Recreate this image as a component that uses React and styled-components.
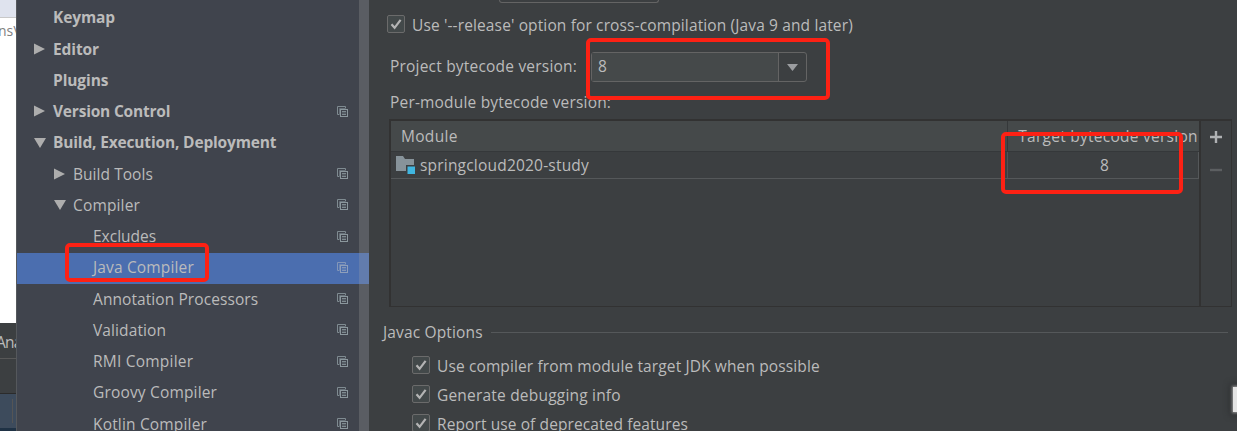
import React from 'react';
import styled, { createGlobalStyle } from 'styled-components';

const Global = createGlobalStyle`
  * { box-sizing: border-box; }
  body { margin: 0; background: #3c3f41; overflow: hidden; }
`;

const Window = styled.div`
  position: relative;
  display: flex;
  width: 1237px;
  height: 431px;
  overflow: hidden;
  background: #3c3f41;
  color: #bbbbbb;
  font-family: 'Open Sans', 'Noto Sans', sans-serif;
  font-size: 15.5px;
  line-height: 20px;
  white-space: nowrap;
`;

const Backdrop = styled.div`
  display: flex;
  flex-direction: column;
  flex: 0 0 17px;
  overflow: hidden;
  background: #fff;
  border-right: 1px solid #55585c;
`;
const BackTop = styled.div`
  height: 18px;
  background: #dfe3ee;
  border-bottom: 1px solid #c8c8c8;
`;
const BackPath = styled.div`
  flex: 1;
  padding-top: 3px;
  margin-left: -2px;
  color: #808080;
  font-size: 14px;
`;
const BackTab = styled.div`
  height: 36px;
  padding-top: 9px;
  background: #3c3f41;
  border-bottom: 1px solid #585858;
  text-indent: -4px;
  letter-spacing: -0.8px;
`;
const BackPanel = styled.div`
  height: 35px;
  background: #3c3f41;
  border-bottom: 1px solid #2b2b2b;
`;
const BackSelection = styled.div`
  height: 37px;
  padding: 5px 3px 9px 0;
  background: #3d4b5c;
  border-bottom: 3px solid #1f3245;
`;
const BackDivider = styled.div`
  height: 24px;
  border-right: 1px solid #555;
`;

const Sidebar = styled.nav`
  position: relative;
  flex: 0 0 351px;
  padding-top: 3px;
  background: #40444d;
`;
const ScrollThumb = styled.div`
  position: absolute;
  top: 0;
  right: 0;
  width: 10px;
  height: 431px;
  background: rgba(166, 166, 166, 0.25);
`;
const TreeRow = styled.div`
  display: flex;
  align-items: center;
  width: 352px;
  height: 31.25px;
  padding-left: ${p => 16 + p.$level * 20}px;
  padding-right: 21px;
  background: ${p => (p.$selected ? '#4b6eaf' : 'transparent')};
  font-weight: ${p => (p.$level === 0 ? 700 : 400)};
`;
const Toggle = styled.span`
  display: flex;
  flex: 0 0 20px;
  padding-left: 1px;
  margin-top: -2px;
  svg { display: block; }
`;
const Label = styled.span`
  flex: 1;
  margin-top: -2.3px;
  letter-spacing: ${p => p.$track || 0}px;
`;
const RowMark = styled.span`
  display: flex;
  margin-top: -2.3px;
`;

const Main = styled.main`
  display: flex;
  flex-direction: column;
  flex: 1;
  padding-left: 15px;
  min-width: 0;
  & > * { flex-shrink: 0; }
`;
const CutField = styled.div`
  width: 160px;
  height: 3px;
  margin: 0 0 8px 115px;
  border: 1px solid #646464;
  border-top: 0;
  border-radius: 0 0 3px 3px;
`;
const CheckRow = styled.label`
  display: flex;
  align-items: center;
  gap: 6px;
  height: 29px;
  margin-left: ${p => p.$indent}px;
`;
const Box = styled.span`
  display: flex;
  align-items: center;
  justify-content: center;
  width: 18px;
  height: 18px;
  margin: 0 1px 3px -1px;
  border: 1px solid #6b6b6b;
  border-radius: 2px;
  background: #43494a;
`;
const Text = styled.span`
  letter-spacing: ${p => p.$track || 0}px;
  margin-bottom: ${p => (p.$lift ? 2 : 0)}px;
`;
const FieldRow = styled.div`
  display: flex;
  align-items: center;
  justify-content: space-between;
  width: 417px;
  height: 30px;
  margin: 12px 0 0 6px;
`;
const Combo = styled.div`
  display: flex;
  width: 216px;
  height: 30px;
  border: 1px solid #646464;
  border-radius: 3px;
`;
const ComboValue = styled.div`
  flex: 1;
  padding: 3px 0 0 6px;
  background: #45494a;
  border-right: 1px solid #646464;
`;
const ComboArrow = styled.div`
  display: flex;
  align-items: center;
  justify-content: center;
  width: 27px;
  padding-top: 1px;
`;
const Caption = styled.div`
  height: 20px;
  margin: 10px 0 7px 6px;
`;
const TableFrame = styled.div`
  display: flex;
  width: 843px;
  height: 188px;
  margin-left: 5px;
  border: 2px solid #323232;
  border-width: 2px 1px 1px 2px;
`;
const Table = styled.div`
  flex: 1;
  min-width: 0;
`;
const HeadRow = styled.div`
  display: flex;
  height: 31px;
  background: #45494a;
  border-bottom: 1px solid #35383a;
`;
const BodyRow = styled.div`
  display: flex;
  height: 27px;
  border-bottom: 1px solid #55585a;
  border-right: 1px solid #55585a;
`;
const ModuleCell = styled.div`
  display: flex;
  align-items: center;
  gap: 4px;
  width: 617px;
  padding-left: ${p => p.$pad}px;
  border-right: 1px solid ${p => (p.$head ? '#35383a' : '#505355')};
`;
const VersionCell = styled.div`
  flex: 1;
  display: flex;
  align-items: center;
  justify-content: center;
  padding-left: ${p => p.$pad}px;
`;
const Tools = styled.div`
  display: flex;
  flex-direction: column;
  align-items: center;
  width: 32px;
  border-left: 2px solid #323232;
  padding-top: 9px;
`;
const Section = styled.div`
  display: flex;
  align-items: center;
  gap: 8px;
  width: 845px;
  height: 20px;
  margin: 16px 0 9px -1px;
`;
const Rule = styled.div`
  flex: 1;
  height: 1px;
  margin-bottom: 1px;
  background: #55585a;
`;

const Highlight = styled.div`
  position: absolute;
  left: ${p => p.$x}px;
  top: ${p => p.$y}px;
  width: ${p => p.$w}px;
  height: ${p => p.$h}px;
  border: 4px solid #fd2114;
  border-radius: 5px;
`;
const Glow = styled.div`
  position: absolute;
  right: -3px;
  top: 387px;
  width: 7px;
  height: 25px;
  background: #e4e4e4;
  box-shadow: 0 0 3px 1px #999, 0 0 6px 3px #2c2e30;
`;

const Arrow = ({ open }) => (
  <svg width="12" height="12" viewBox="0 0 12 12">
    <path d={open ? 'M0 1H12L6 11Z' : 'M0 0.5V11.5L11 6Z'} fill="#adadad" />
  </svg>
);
const CopyIcon = ({ selected }) => (
  <svg width="11" height="11" viewBox="0 0 11 11">
    <path d="M2.5 8.5H0.5V0.5H8.5V2.5" fill="none" stroke={selected ? '#8396b8' : '#7f8b91'} />
    <path d="M2.5 8V2.5H8" fill="none" stroke={selected ? '#6f88b5' : '#68727a'} />
    <rect x="3.5" y="3.5" width="7" height="7" fill="none" stroke={selected ? '#8e9fbb' : '#8b979d'} />
    <path d="M5 5.5H9M5 8.5H9" stroke={selected ? '#8396b8' : '#7f8b91'} />
    <path d="M5 7H9" stroke={selected ? '#6f88b5' : '#6b757c'} />
  </svg>
);
const Check = () => (
  <svg width="14" height="14" viewBox="0 0 14 14">
    <path d="M2.5 7.2L5.6 10.8L11.6 2.8" fill="none" stroke="#b4b4b4" strokeWidth="2.2" />
  </svg>
);
const ModuleIcon = () => (
  <svg width="20" height="18" viewBox="0 0 20 18">
    <path d="M0 0H7L9 3H18V9H10V15H0Z" fill="#87939a" />
    <rect x="11.5" y="10.5" width="7.5" height="7.5" fill="#40b6e0" />
  </svg>
);

const tree = [
  { text: 'Keymap', level: 0, track: -0.1 },
  { text: 'Editor', level: 0, open: false, track: -0.1 },
  { text: 'Plugins', level: 0, track: -0.1 },
  { text: 'Version Control', level: 0, open: false, copy: true, track: -0.2 },
  { text: 'Build, Execution, Deployment', level: 0, open: true, track: -0.16 },
  { text: 'Build Tools', level: 1, open: false, copy: true, track: 0.05 },
  { text: 'Compiler', level: 1, open: true, copy: true, track: 0.15 },
  { text: 'Excludes', level: 2, copy: true },
  { text: 'Java Compiler', level: 2, copy: true, selected: true, track: 0.15 },
  { text: 'Annotation Processors', level: 2, copy: true, track: 0.08 },
  { text: 'Validation', level: 2, copy: true, track: 0.1 },
  { text: 'RMI Compiler', level: 2, copy: true, track: 0.22 },
  { text: 'Groovy Compiler', level: 2, copy: true, track: 0.17 },
  { text: 'Kotlin Compiler', level: 2, copy: true, track: 0.17 },
];

const javac = [
  { text: 'Use compiler from module target JDK when possible', track: 0.12 },
  { text: 'Generate debugging info', track: 0.2 },
  { text: 'Report use of deprecated features', track: 0.1 },
];

export default function App() {
  return (
    <Window>
      <Global />
      <Backdrop>
        <BackTop />
        <BackPath>ns\</BackPath>
        <BackTab>Ana</BackTab>
        <BackPanel />
        <BackSelection><BackDivider /></BackSelection>
      </Backdrop>
      <Sidebar>
        {tree.map(n => (
          <TreeRow key={n.text} $level={n.level} $selected={n.selected}>
            <Toggle>{n.open !== undefined && <Arrow open={n.open} />}</Toggle>
            <Label $track={n.track}>{n.text}</Label>
            {n.copy && <RowMark><CopyIcon selected={n.selected} /></RowMark>}
          </TreeRow>
        ))}
        <ScrollThumb />
      </Sidebar>
      <Main>
        <CutField />
        <CheckRow $indent={4}>
          <Box><Check /></Box>
          <Text $lift $track={0.13}>Use '--release' option for cross-compilation (Java 9 and later)</Text>
        </CheckRow>
        <FieldRow>
          <Text $lift $track={0.2}>Project bytecode version:</Text>
          <Combo>
            <ComboValue>8</ComboValue>
            <ComboArrow>
              <svg width="11" height="7" viewBox="0 0 11 7"><path d="M0 0H11L5.5 7Z" fill="#9b9da0" /></svg>
            </ComboArrow>
          </Combo>
        </FieldRow>
        <Caption><Text $track={0.18}>Per-module bytecode version:</Text></Caption>
        <TableFrame>
          <Table>
            <HeadRow>
              <ModuleCell $pad={10} $head><Text $track={0.3}>Module</Text></ModuleCell>
              <VersionCell $pad={9}><Text $track={0.26}>Target bytecode version</Text></VersionCell>
            </HeadRow>
            <BodyRow>
              <ModuleCell $pad={5}><ModuleIcon /><Text $track={0.2}>springcloud2020-study</Text></ModuleCell>
              <VersionCell $pad={3}>8</VersionCell>
            </BodyRow>
          </Table>
          <Tools>
            <svg width="14" height="44" viewBox="0 0 14 44">
              <path d="M1 7H13M7 1V13" stroke="#afb1b3" strokeWidth="2.4" />
              <path d="M1 40H13" stroke="#5c5f61" strokeWidth="2.4" />
            </svg>
          </Tools>
        </TableFrame>
        <Section><Text $lift $track={0.15}>Javac Options</Text><Rule /></Section>
        {javac.map(o => (
          <CheckRow key={o.text} $indent={29}>
            <Box><Check /></Box>
            <Text $lift $track={o.track}>{o.text}</Text>
          </CheckRow>
        ))}
      </Main>
      <Highlight $x={64.5} $y={243} $w={144} $h={38.5} />
      <Highlight $x={586} $y={38.4} $w={244} $h={62} />
      <Highlight $x={1001} $y={132.4} $w={182} $h={62} />
      <Glow />
    </Window>
  );
}
